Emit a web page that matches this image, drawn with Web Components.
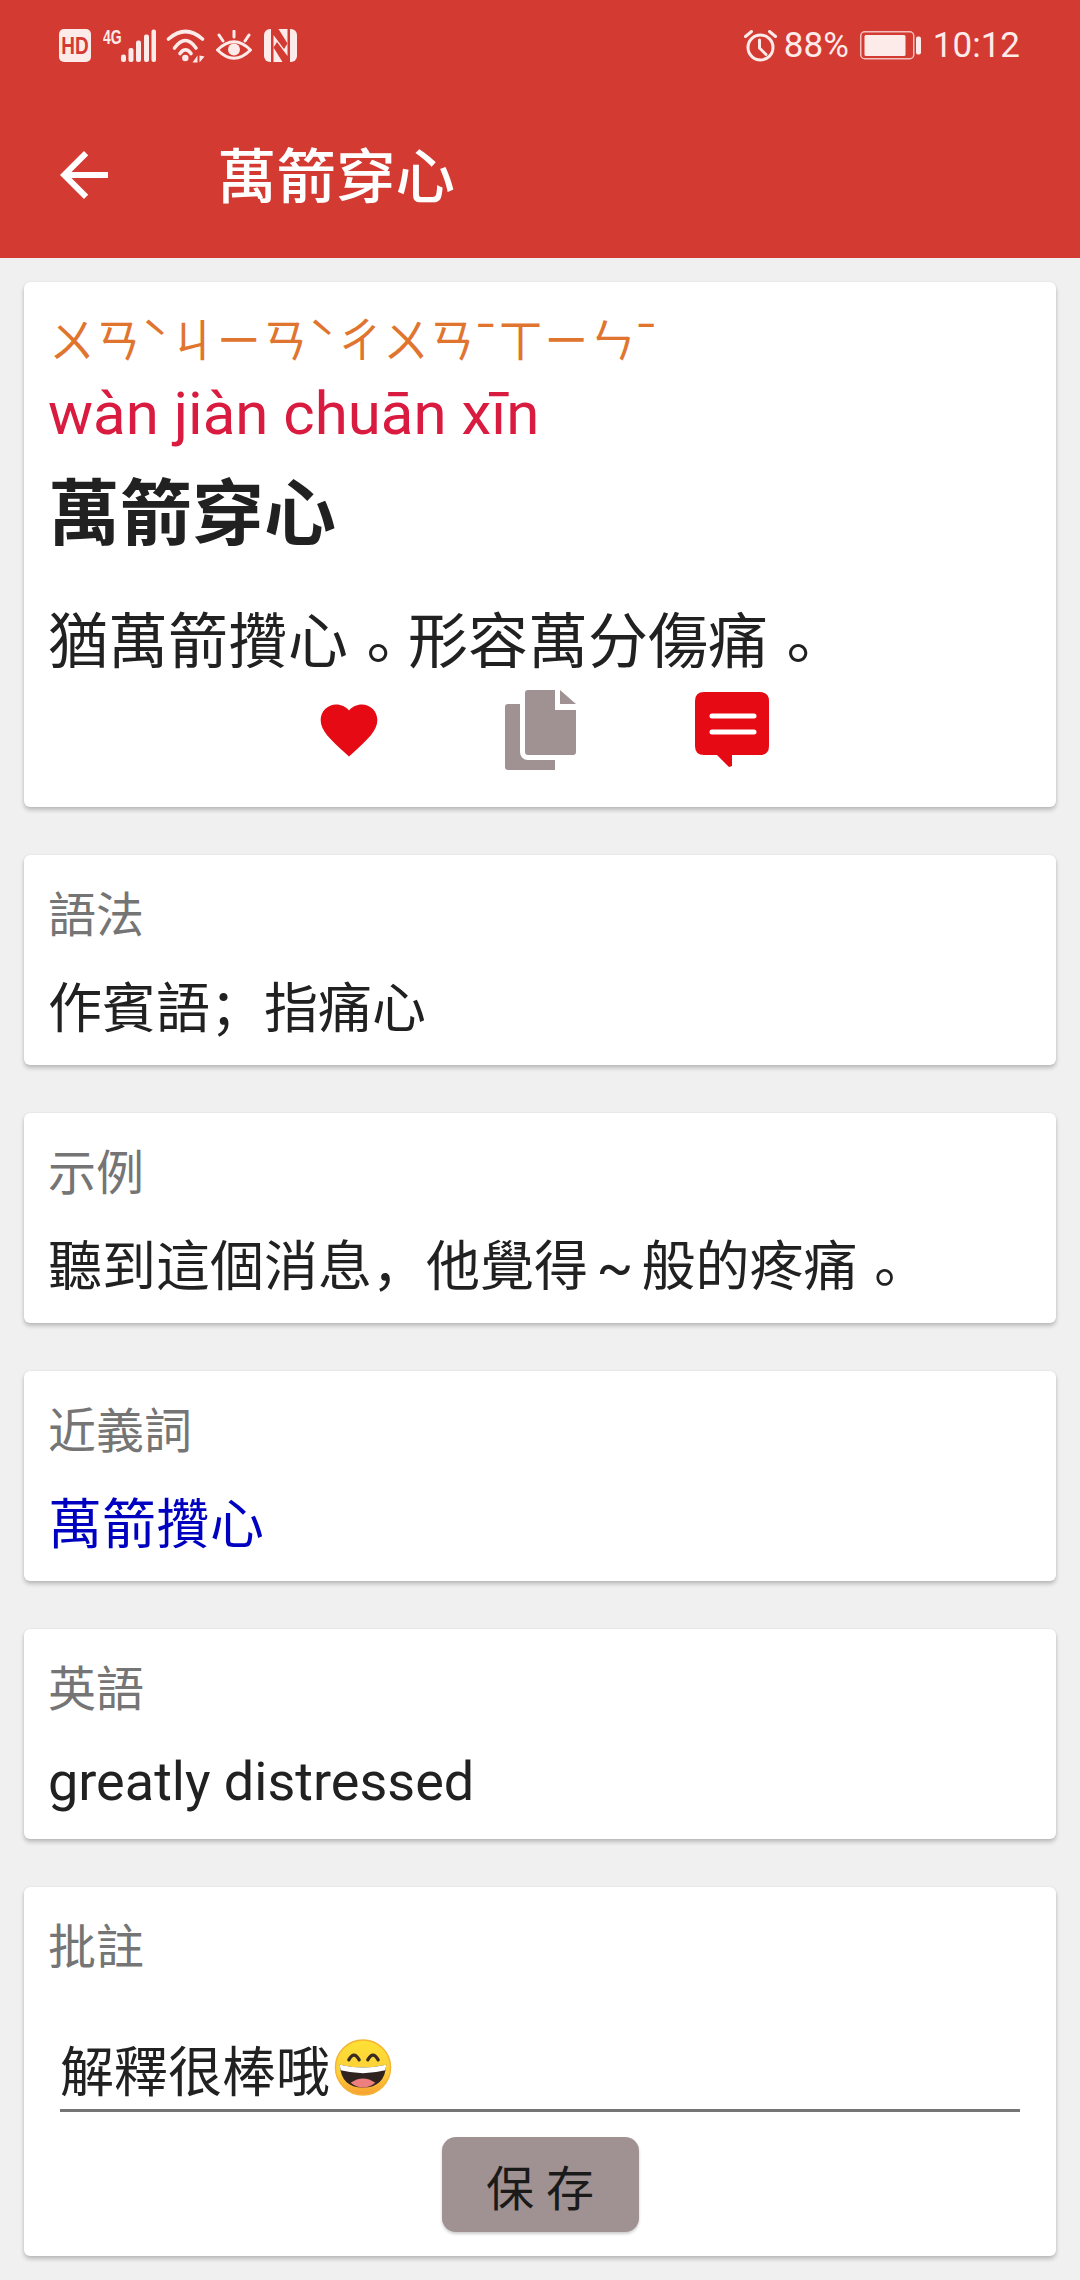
<!DOCTYPE html>
<html lang="zh-Hans">
<head>
<meta charset="utf-8">
<title>萬箭穿心</title>
<style>
	html, body {
		margin: 0;
		padding: 0;
		background-color: #f0f0f0;
		color: #212121;
		font-family: Roboto, "Noto Sans CJK SC", sans-serif;
	}
	/* de punt staat in het origineel in het midden van de cel, maar wel onderaan */
	.punt {
		font-family: "Noto Sans CJK TC", sans-serif;
		line-height: 1;
		vertical-align: -.22em;
	}
</style>
</head>
<body>
<status-bar></status-bar>
<app-toolbar>萬箭穿心</app-toolbar>
<main-list>
	<headword-card>
		<span slot="zhuyin">ㄨㄢˋ ㄐㄧㄢˋ ㄔㄨㄢˉ ㄒㄧㄣˉ</span>
		<span slot="pinyin">wàn jiàn chuān xīn</span>
		<span slot="word">萬箭穿心</span>
		<span slot="meaning">猶萬箭攢心<span class="punt" lang="zh-Hant">。</span>形容萬分傷痛<span class="punt" lang="zh-Hant">。</span></span>
	</headword-card>
	<info-card label="語法">作賓語；指痛心</info-card>
	<info-card label="示例">聽到這個消息，他覺得<span style="word-spacing:-5px"> ~ </span>般的疼痛<span class="punt" lang="zh-Hant">。</span></info-card>
	<info-card label="近義詞" link>萬箭攢心</info-card>
	<info-card label="英語" latin>greatly distressed</info-card>
	<note-card label="批註" button="保 存">解釋很棒哦</note-card>
</main-list>

<script>
const CJK = `Roboto, "Noto Sans CJK SC", sans-serif`;

class StatusBar extends HTMLElement {
	constructor() {
		super();
		const shadowRoot = this.attachShadow({ mode: "open" });
		shadowRoot.innerHTML = `
		<style>
			:host {
				display: flex;
				align-items: center;
				justify-content: space-between;
				height: 91px;
				padding: 0 60px 0 59px;
				background-color: #d33a32;
				color: #fdebea;
				font-family: Roboto, sans-serif;
				font-size: 35px;
				font-weight: 400;
			}
			.side { display: flex; align-items: center; }
			svg { display: block; flex: none; }
			.left { gap: 10px; }
			.pct { margin: 0 11px 0 7px; }
			.time { margin-left: 12px; }
		</style>
		<div class="side left">
			<svg width="32" height="33" viewBox="0 0 32 33">
				<rect width="32" height="33" rx="5" fill="#fdebea"/>
				<text transform="translate(16 25) scale(1 1.25)" text-anchor="middle" font-family="Liberation Sans" font-weight="700" font-size="19" fill="#d33a32">HD</text>
			</svg>
			<svg width="53" height="37" viewBox="0 -4 53 37" style="margin:-4px 0 0 2px" fill="#fdebea">
				<text transform="translate(0 15) scale(1 1.4)" font-family="Liberation Sans" font-weight="700" font-size="14">4G</text>
				<rect x="18" y="25.5" width="5" height="7.5" rx="2.2"/>
				<rect x="25.5" y="19" width="5" height="14" rx="2"/>
				<rect x="33" y="11.5" width="5" height="21.5" rx="2"/>
				<rect x="41" y="5.5" width="5" height="27.5" rx="2"/>
				<rect x="48.5" y="0.5" width="4.5" height="32.5" rx="2"/>
			</svg>
			<svg width="40" height="34" viewBox="0 0 40 34" fill="none" stroke="#fdebea" stroke-width="3.6" stroke-linecap="round">
				<path d="M2.5 10Q19.5 -5 36.5 10"/>
				<path d="M8.5 19Q19.5 4 30 19"/>
				<path d="M14 24.5Q19.5 17 25 24.5"/>
				<circle cx="19.3" cy="29" r="3.2" fill="#fdebea" stroke="none"/>
				<path d="M31.5 26.5V33.5H26.5Z M33.5 26.5V33.5L38.5 27.5Z" fill="#fdebea" stroke="none"/>
			</svg>
			<svg width="36" height="32" viewBox="0 0 36 32" fill="none" stroke="#fdebea" stroke-width="3" stroke-linecap="round">
				<path d="M1.5 20Q18 3.5 34.5 20Q18 36.5 1.5 20Z"/>
				<circle cx="18" cy="19.5" r="6" fill="#fdebea" stroke="none"/>
				<path d="M18 1V7M3 5L7 11M33 5L29 11"/>
			</svg>
			<svg width="33" height="33" viewBox="0 0 33 33" style="margin-left:2px">
				<rect width="33" height="33" rx="6" fill="#fdebea"/>
				<path d="M7 0H14.5L23.5 14.5L20 20L9.5 6V33H7Z" fill="#d33a32"/>
				<path d="M26 33H18.5L9.5 18.5L13 13L23.5 27V0H26Z" fill="#d33a32"/>
			</svg>
		</div>
		<div class="side">
			<svg width="33" height="33" viewBox="0 0 33 33" fill="none" stroke="#fdebea" stroke-width="3" stroke-linecap="round" stroke-linejoin="round">
				<circle cx="16.5" cy="18.5" r="12.5"/>
				<path d="M15.5 11V19L22 25.5"/>
				<path d="M1.5 7.5L7.5 2.5M31.5 7.5L25.5 2.5"/>
			</svg>
			<span class="pct">88%</span>
			<svg width="61" height="29" viewBox="0 0 61 29">
				<rect x="0.75" y="0.75" width="53" height="27" rx="4" fill="none" stroke="#fdebea" stroke-opacity=".75" stroke-width="1.5"/>
				<rect x="4.5" y="4" width="41" height="21" rx="1.5" fill="#fdebea"/>
				<rect x="56" y="5.5" width="5" height="18" rx="2" fill="#fdebea"/>
			</svg>
			<span class="time">10:12</span>
		</div>
		`;
	}
}

class AppToolbar extends HTMLElement {
	constructor() {
		super();
		const shadowRoot = this.attachShadow({ mode: "open" });
		shadowRoot.innerHTML = `
		<style>
			:host {
				display: flex;
				align-items: center;
				gap: 97px;
				height: 167px;
				padding-left: 48px;
				background-color: #d33a32;
				color: #fff;
				font-family: ${CJK};
				font-size: 59.5px;
				font-weight: 500;
			}
			svg { display: block; flex: none; }
			.title { padding-bottom: 5px; }
		</style>
		<svg width="72" height="72" viewBox="0 0 24 24" fill="#fff">
			<path d="M20 11H7.83l5.59-5.59L12 4l-8 8 8 8 1.41-1.41L7.83 13H20v-2z"/>
		</svg>
		<div class="title"><slot></slot></div>
		`;
	}
}

class MainList extends HTMLElement {
	constructor() {
		super();
		const shadowRoot = this.attachShadow({ mode: "open" });
		shadowRoot.innerHTML = `
		<style>
			:host {
				display: flex;
				flex-direction: column;
				gap: 48px;
				padding: 24px;
			}
		</style>
		<slot></slot>
		`;
	}
}

// gemeenschappelijke kaart-stijl
const cardStyle = `
	:host {
		display: block;
		padding: 24px 24px 16px;
		background-color: #fff;
		border-radius: 6px;
		box-shadow: 0 3px 4px rgba(0, 0, 0, .22), 0 0 2px rgba(0, 0, 0, .08);
		color: #212121;
		font-family: ${CJK};
	}
	.label {
		padding-top: 3px;
		font-size: 48px;
		line-height: 68px;
		color: #757575;
	}
`;

class HeadwordCard extends HTMLElement {
	constructor() {
		super();
		const shadowRoot = this.attachShadow({ mode: "open" });
		shadowRoot.innerHTML = `
		<style>
			${cardStyle}
			:host { padding-bottom: 37px; }
			.zhuyin { padding-left: 1px; font-size: 46px; line-height: 70px; word-spacing: -10px; color: #e0752f; white-space: nowrap; }
			.pinyin { font-family: Roboto, sans-serif; font-size: 60px; line-height: 76px; color: #d81b3f; }
			.word { margin-top: 18px; font-size: 72px; line-height: 90px; font-weight: 700; }
			.meaning { margin-top: 41px; font-size: 60px; line-height: 84px; white-space: nowrap; }
			.actions { display: flex; justify-content: center; align-items: center; margin-top: 5px; padding-left: 3px; height: 80px; }
			.actions svg:nth-child(2) { margin: 0 119px 0 122px; }
			svg { display: block; flex: none; }
		</style>
		<div class="zhuyin"><slot name="zhuyin"></slot></div>
		<div class="pinyin"><slot name="pinyin"></slot></div>
		<div class="word"><slot name="word"></slot></div>
		<div class="meaning"><slot name="meaning"></slot></div>
		<div class="actions">
			<svg width="68" height="68" viewBox="0 0 24 24" fill="#e60a14">
				<path d="M12 21.35l-1.45-1.32C5.4 15.36 2 12.28 2 8.5 2 5.42 4.42 3 7.5 3c1.74 0 3.41.81 4.5 2.09C13.09 3.81 14.76 3 16.5 3 19.58 3 22 5.42 22 8.5c0 3.78-3.4 6.86-8.55 11.54L12 21.35z"/>
			</svg>
			<svg width="71" height="80" viewBox="0 0 71 80">
				<path d="M3 14H50V80H3Q0 80 0 77V17Q0 14 3 14Z" fill="#a09292"/>
				<path d="M23 0H50V20H71V62Q71 65 68 65H23Q20 65 20 62V3Q20 0 23 0Z" fill="#a09292" stroke="#fff" stroke-width="10" paint-order="stroke"/>
				<path d="M55 0L71 14H55Z" fill="#a09292"/>
			</svg>
			<svg width="74" height="76" viewBox="0 0 74 76">
				<path d="M9 0H65Q74 0 74 9V54Q74 63 65 63H37V74L34 75L22 63H9Q0 63 0 54V9Q0 0 9 0Z" fill="#e60a14"/>
				<path d="M17 24H59M17 40H59" stroke="#fff" stroke-width="5" stroke-linecap="round"/>
			</svg>
		</div>
		`;
	}
}

class InfoCard extends HTMLElement {
	constructor() {
		super();
		const shadowRoot = this.attachShadow({ mode: "open" });
		const kleur = this.hasAttribute("link") ? "#0000c0" : "#212121";
		// latijnse tekst staat iets hoger dan de CJK regels
		const marge = this.hasAttribute("latin") ? 16 : 18;
		shadowRoot.innerHTML = `
		<style>
			${cardStyle}
			:host { height: 170px; }
			.value { margin-top: ${marge}px; font-size: 54px; line-height: 84px; color: ${kleur}; white-space: nowrap; }
		</style>
		<div class="label">${this.getAttribute("label")}</div>
		<div class="value"><slot></slot></div>
		`;
	}
}

class NoteCard extends HTMLElement {
	constructor() {
		super();
		const shadowRoot = this.attachShadow({ mode: "open" });
		shadowRoot.innerHTML = `
		<style>
			${cardStyle}
			:host { padding-bottom: 24px; }
			.field {
				display: flex;
				align-items: center;
				height: 81px;
				margin: 46px 12px 0;
				border-bottom: 3px solid #757575;
				font-size: 54px;
			}
			.field svg { display: block; flex: none; margin: -2px 0 0 3px; }
			.save {
				display: flex;
				align-items: center;
				justify-content: center;
				width: 197px;
				height: 95px;
				margin: 25px auto 0;
				background-color: #a09292;
				border-radius: 14px;
				box-shadow: 0 2px 3px rgba(0, 0, 0, .2);
				font-size: 48px;
				color: #1a1a1a;
			}
		</style>
		<div class="label">${this.getAttribute("label")}</div>
		<div class="field">
			<slot></slot>
			<svg width="60" height="57" viewBox="0 0 60 60">
				<defs>
					<linearGradient id="face" x1="0" y1="0" x2="0" y2="1">
						<stop offset="0" stop-color="#fee133"/>
						<stop offset=".6" stop-color="#fccf3a"/>
						<stop offset="1" stop-color="#f6a033"/>
					</linearGradient>
				</defs>
				<circle cx="30" cy="30" r="29" fill="url(#face)" stroke="#f5b335" stroke-width="1.5"/>
				<path d="M15 22Q20.5 12 26 22M35 22Q40.5 12 46 22" fill="none" stroke="#3a2b20" stroke-width="3.4" stroke-linecap="round"/>
				<path d="M5.5 27Q30 33 54.5 27Q53 51 30 51Q7 51 5.5 27Z" fill="#2f2320"/>
				<path d="M5.5 27Q30 33 54.5 27L53.5 33Q30 39 6.5 33Z" fill="#fff"/>
				<path d="M17 46Q30 37 43 46Q37 51 30 51Q23 51 17 46Z" fill="#ee7f7f"/>
			</svg>
		</div>
		<div class="save">${this.getAttribute("button")}</div>
		`;
	}
}

customElements.define("status-bar", StatusBar);
customElements.define("app-toolbar", AppToolbar);
customElements.define("main-list", MainList);
customElements.define("headword-card", HeadwordCard);
customElements.define("info-card", InfoCard);
customElements.define("note-card", NoteCard);
</script>
</body>
</html>
